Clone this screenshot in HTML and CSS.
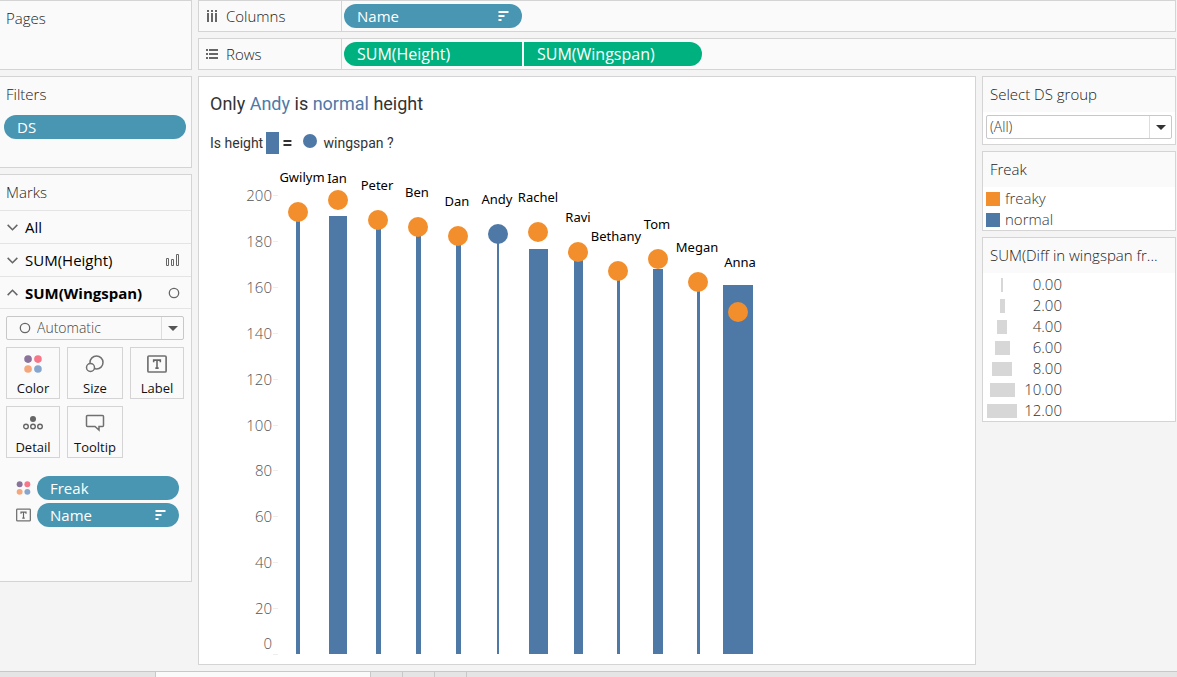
FILE: index.html
```
<!DOCTYPE html>
<html lang="en">
<head>
<meta charset="utf-8">
<meta name="viewport" content="width=device-width, initial-scale=1">
<title>Height and wingspan</title>
<link rel="stylesheet" href="styles.css">
</head>
<body>
<svg class="defs" aria-hidden="true">
  <symbol id="sort" viewBox="0 0 10 10"><path d="M0 0h10v2H0zM0 4h6v2H0zM0 8h3v2H0z" fill="#fff"/></symbol>
  <symbol id="dots" viewBox="0 0 16 16"><circle cx="3.6" cy="3.6" r="3.4" fill="#8a739b"/><circle cx="12.4" cy="3.6" r="3.4" fill="#f8768a"/><circle cx="3.6" cy="12.4" r="3.4" fill="#f4a67c"/><circle cx="12.4" cy="12.4" r="3.4" fill="#86a6cd"/></symbol>
  <symbol id="text" viewBox="0 0 18 16"><rect x=".8" y=".8" width="16.4" height="14.4" rx="1" fill="none" stroke="#707070" stroke-width="1.5"/><path d="M6 6.5V4.5h6v2M9 4.5v7M7.5 11.7h3" fill="none" stroke="#666" stroke-width="1.4"/></symbol>
  <symbol id="down" viewBox="0 0 10 6"><path d="M.6.6 5 5 9.400.6" fill="none" stroke="#666" stroke-width="1.4"/></symbol>
  <symbol id="up" viewBox="0 0 10 6"><path d="M.6 5.400 5 1l4.400 4.400" fill="none" stroke="#666" stroke-width="1.4"/></symbol>
  <symbol id="ring" viewBox="0 0 12 12"><circle cx="6" cy="6" r="4.700" fill="none" stroke="#666" stroke-width="1.300"/></symbol>
</svg>
<div class="workspace">
  <aside class="side">
    <section class="card pages"><h2>Pages</h2></section>
    <section class="card filters"><h2>Filters</h2><button class="pill">DS</button></section>
    <section class="card marks">
      <h2>Marks</h2>
      <button class="layer"><svg class="chev"><use href="#down"/></svg><span>All</span></button>
      <button class="layer"><svg class="chev"><use href="#down"/></svg><span>SUM(Height)</span>
        <svg class="bars" viewBox="0 0 14 12"><path d="M.5 4.500h2v7h-2zM5.500 5.500h2v6h-2zM10.500.5h2v11h-2z" fill="none" stroke="#666"/></svg></button>
      <button class="layer current"><svg class="chev"><use href="#up"/></svg><span>SUM(Wingspan)</span><svg class="ring"><use href="#ring"/></svg></button>
      <div class="markbody">
        <div class="combo auto"><svg class="ring"><use href="#ring"/></svg><select aria-label="Mark type"><option>Automatic</option></select><span class="arrow"></span></div>
        <div class="tiles">
          <button class="tile"><svg class="t-dots"><use href="#dots"/></svg>Color</button>
          <button class="tile"><svg viewBox="0 0 20 18"><circle cx="11.500" cy="7.500" r="6.500" fill="none" stroke="#707070" stroke-width="1.500"/><circle cx="5.500" cy="12.500" r="4" fill="#fafafa" stroke="#707070" stroke-width="1.500"/></svg>Size</button>
          <button class="tile"><svg class="t-text"><use href="#text"/></svg>Label</button>
          <button class="tile"><svg viewBox="0 0 20 18"><circle cx="10" cy="5" r="3" fill="#666"/><g fill="none" stroke="#666" stroke-width="1.400"><circle cx="3" cy="12.500" r="2.300"/><circle cx="10" cy="12.500" r="2.300"/><circle cx="17" cy="12.500" r="2.300"/></g></svg>Detail</button>
          <button class="tile"><svg viewBox="0 0 20 18"><path d="M2.500 1.500h15a1 1 0 0 1 1 1v9a1 1 0 0 1-1 1H14v3.500l-4-3.500H2.500a1 1 0 0 1-1-1v-9a1 1 0 0 1 1-1z" fill="none" stroke="#707070" stroke-width="1.500"/></svg>Tooltip</button>
        </div>
        <div class="encodings">
          <div class="enc"><svg><use href="#dots"/></svg><button class="pill">Freak</button></div>
          <div class="enc"><svg><use href="#text"/></svg><button class="pill">Name<svg class="sort"><use href="#sort"/></svg></button></div>
        </div>
      </div>
    </section>
  </aside>
  <main class="main">
    <section class="shelf">
      <h2><svg viewBox="0 0 12 12"><path d="M1 0h2v2H1zM5 0h2v2H5zM9 0h2v2H9zM1 3h2v9H1zM5 3h2v9H5zM9 3h2v9H9z" fill="#666"/></svg>Columns</h2>
      <div class="pills"><button class="pill">Name<svg class="sort"><use href="#sort"/></svg></button></div>
    </section>
    <section class="shelf">
      <h2><svg viewBox="0 0 12 12"><path d="M0 1h2v2H0zM0 5h2v2H0zM0 9h2v2H0zM3 1h9v2H3zM3 5h9v2H3zM3 9h9v2H3z" fill="#666"/></svg>Rows</h2>
      <div class="pills"><button class="pill green first">SUM(Height)</button><button class="pill green last">SUM(Wingspan)</button></div>
    </section>
    <div class="view">
      <section class="sheet">
        <header>
          <h1>Only <em>Andy</em> is <em>normal</em> height</h1>
          <p>Is height<i class="block"></i><b>=</b><i class="ball"></i>wingspan ?</p>
        </header>
        <svg class="chart" viewBox="199 160 560 500" role="img" aria-label="Height bars and wingspan circles by name">
          <g class="ticks"><path d="M273 195.500h5M273 241.500h5M273 287.500h5M273 333.500h5M273 379.500h5M273 425.500h5M273 470.500h5M273 516.500h5M273 562.500h5M273 608.500h5M273 654.500h5"/></g>
          <g class="axis"><text x="272" y="201">200</text><text x="272" y="247">180</text><text x="272" y="293">160</text><text x="272" y="339">140</text><text x="272" y="385">120</text><text x="272" y="431">100</text><text x="272" y="476">80</text><text x="272" y="522">60</text><text x="272" y="568">40</text><text x="272" y="614">20</text><text x="272" y="649">0</text></g>
          <path class="bar" d="M296 212h4v442h-4zM329 216h18v438h-18zM376 220h5v434h-5zM416 227h5v427h-5zM456 236h5v418h-5zM497 234h2v420h-2zM529 249h19v405h-19zM574 252h9v402h-9zM617 271h3v383h-3zM653 269h10v385h-10zM697 282h3v372h-3zM723 285h30v369h-30z"/>
          <g class="freaky"><circle cx="298" cy="212" r="10"/><circle cx="338" cy="200" r="10"/><circle cx="378" cy="220" r="10"/><circle cx="418" cy="227" r="10"/><circle cx="458" cy="236" r="10"/><circle cx="538" cy="232" r="10"/><circle cx="578" cy="252" r="10"/><circle cx="618" cy="271" r="10"/><circle cx="658" cy="259" r="10"/><circle cx="698" cy="282" r="10"/><circle cx="738" cy="312" r="10"/></g>
          <circle class="bar" cx="498" cy="234" r="10"/>
          <g class="names"><text x="302" y="182">Gwilym</text><text x="337" y="183">Ian</text><text x="377" y="190">Peter</text><text x="417" y="197">Ben</text><text x="457" y="206">Dan</text><text x="497" y="204">Andy</text><text x="538" y="202">Rachel</text><text x="578" y="222">Ravi</text><text x="616" y="241">Bethany</text><text x="657" y="229">Tom</text><text x="697" y="252">Megan</text><text x="740" y="267">Anna</text></g>
        </svg>
      </section>
      <aside class="legends">
        <section class="card"><h2><label for="ds">Select DS group</label></h2><div class="combo"><select id="ds"><option>(All)</option></select><span class="arrow"></span></div></section>
        <section class="card"><h2>Freak</h2><ul class="colors"><li><i class="sw orange"></i>freaky</li><li><i class="sw blue"></i>normal</li></ul></section>
        <section class="card"><h2>SUM(Diff in wingspan fr...</h2>
          <ul class="sizes"><li><i style="width:2px"></i><span>0.00</span></li><li><i style="width:5px"></i><span>2.00</span></li><li><i style="width:10px"></i><span>4.00</span></li><li><i style="width:15px"></i><span>6.00</span></li><li><i style="width:20px"></i><span>8.00</span></li><li><i style="width:25px"></i><span>10.00</span></li><li><i style="width:30px"></i><span>12.00</span></li></ul>
        </section>
      </aside>
    </div>
  </main>
</div>
<nav class="tabs" aria-label="Sheets"><span class="tab wide"></span><span class="tab active"></span><span class="tab"></span><span class="tab"></span><span class="tab"></span></nav>
</body>
</html>
```
FILE: styles.css
```
* { box-sizing: border-box; }
body { margin: 0; height: 100vh; display: flex; flex-direction: column; overflow: hidden; background: #f4f4f4; color: #333; font: 15px/20px "Open Sans", "Noto Sans", sans-serif; }
h1, h2, p, ul { margin: 0; padding: 0; font-weight: 400; }
ul { list-style: none; }
button, select { font: inherit; color: inherit; }
button { padding: 0; text-align: left; cursor: pointer; }
svg { flex: none; }
.defs { position: absolute; width: 0; height: 0; }
.workspace { flex: 1; display: flex; gap: 6px; padding-right: 1px; }
.side { width: 192px; flex: none; display: flex; flex-direction: column; gap: 6px; }
.card { background: #fafafa; border: 1px solid #d4d4d4; }
.side .card { border-left: 0; }
h2 { font-size: 15px; font-weight: 300; line-height: 20px; color: #222; }
.side h2 { padding: 7px 6px 8px; }
.pages { height: 70px; }
.filters { height: 92px; }
.filters .pill { width: 182px; margin: 3px 4px; }
.marks { height: 408px; }
.pill { display: flex; align-items: center; justify-content: space-between; height: 24px; padding: 0 13px; border: 0; border-radius: 12px; background: #4996b2; color: #fff; }
.sort { width: 11px; height: 10px; }
.layer { display: flex; align-items: center; gap: 7px; width: 100%; height: 33px; padding: 0 11px 0 7px; border: 0; border-top: 1px solid #e4e4e4; background: none; color: #000; }
.layer span { flex: 1; }
.layer.current { height: 32px; font-weight: 700; }
.chev { width: 11px; height: 7px; }
.bars { width: 14px; height: 12px; }
.ring { width: 12px; height: 12px; }
.markbody { border-top: 1px solid #e4e4e4; padding: 7px 7px 0 6px; }
.combo { display: flex; align-items: center; height: 24px; border: 1px solid #c8c8c8; border-radius: 2px; background: #fff; }
.combo select { flex: 1; min-width: 0; height: 22px; appearance: none; border: 0; padding: 0 3px; background: transparent; font-size: 14px; font-weight: 300; }
.arrow { width: 22px; height: 22px; display: flex; align-items: center; justify-content: center; border-left: 1px solid #ddd; pointer-events: none; }
.arrow::after { content: ""; border: 5px solid transparent; border-top-color: #333; border-bottom: 0; }
.combo.auto { background: #fafafa; padding-left: 12px; }
.auto select { color: #444; padding-left: 6px; }
.auto .arrow::after { border-top-color: #555; }
.tiles { display: grid; grid-template-columns: 54px 56px 54px; gap: 7px; margin-top: 7px; }
.tile { height: 52px; padding: 7px 0 0; display: flex; flex-direction: column; align-items: center; gap: 5px; border: 1px solid #d4d4d4; background: #fafafa; color: #111; font-size: 13px; line-height: 20px; }
.tile svg { width: 20px; height: 18px; }
.encodings { display: grid; gap: 3px; margin-top: 18px; }
.enc { display: flex; align-items: center; gap: 6px; padding-left: 10px; }
.enc > svg { width: 15px; height: 14px; }
.enc .pill { width: 142px; }
.main { flex: 1; min-width: 0; display: flex; flex-direction: column; gap: 6px; }
.shelf { display: flex; height: 32px; flex: none; border: 1px solid #d4d4d4; background: #fafafa; }
.shelf h2 { width: 143px; display: flex; align-items: center; gap: 8px; padding-left: 7px; border-right: 1px solid #d4d4d4; }
.shelf h2 svg { width: 12px; height: 12px; }
.pills { display: flex; align-items: center; gap: 2px; padding-left: 2px; }
.pills .pill { width: 178px; }
.green { background: #00b180; font-size: 16px; }
.first { border-radius: 12px 0 0 12px; }
.last { border-radius: 0 12px 12px 0; }
.view { flex: 1; display: flex; gap: 6px; align-items: stretch; padding-bottom: 6px; }
.sheet { flex: 1; min-width: 0; background: #fff; border: 1px solid #d4d4d4; }
.sheet header { height: 83px; padding: 12px 11px 0; font-family: Roboto, sans-serif; }
h1 { font-size: 18px; line-height: 30px; }
em { font-style: normal; color: #4e79a7; }
header p { display: flex; align-items: center; margin-top: 12px; font-size: 14px; line-height: 24px; }
header b { font-size: 18px; }
.block { width: 13px; height: 22px; margin: 0 3px; background: #4e79a7; }
.ball { width: 14px; height: 14px; margin: 0 7px 4px 10px; border-radius: 50%; background: #4e79a7; }
.chart { display: block; width: 560px; height: 500px; }
.ticks { stroke: #eee; }
.axis { fill: #555; font-size: 15px; font-weight: 300; text-anchor: end; }
.names { fill: #000; font-family: "Noto Sans", sans-serif; font-size: 13px; text-anchor: middle; }
.bar { fill: #4e79a7; }
.freaky { fill: #f28e2b; }
.legends { width: 194px; flex: none; display: flex; flex-direction: column; gap: 6px; }
.legends .card { background: #fff; }
.legends h2 { padding: 7px 7px 8px; background: #fafafa; white-space: nowrap; }
.legends .combo { margin: 3px 3px 5px; }
.colors, .sizes { padding-top: 1px; font-weight: 300; line-height: 21px; }
.colors li { display: flex; align-items: center; gap: 5px; padding-left: 3px; }
.sw { width: 14px; height: 14px; }
.orange { background: #f28e2b; }
.blue { background: #4e79a7; }
.sizes li { display: grid; grid-template-columns: 30px 42px; gap: 3px; padding-left: 4px; align-items: center; justify-items: center; }
.sizes i { height: 14px; background: #d7d7d7; }
.sizes span { justify-self: end; }
.tabs { display: flex; flex: none; height: 6px; border-top: 1px solid #c8c8c8; background: #e5e5e5; }
.tab { width: 32px; border-right: 1px solid #c8c8c8; }
.wide { width: 156px; }
.active { width: 215px; background: #fafafa; }
```
